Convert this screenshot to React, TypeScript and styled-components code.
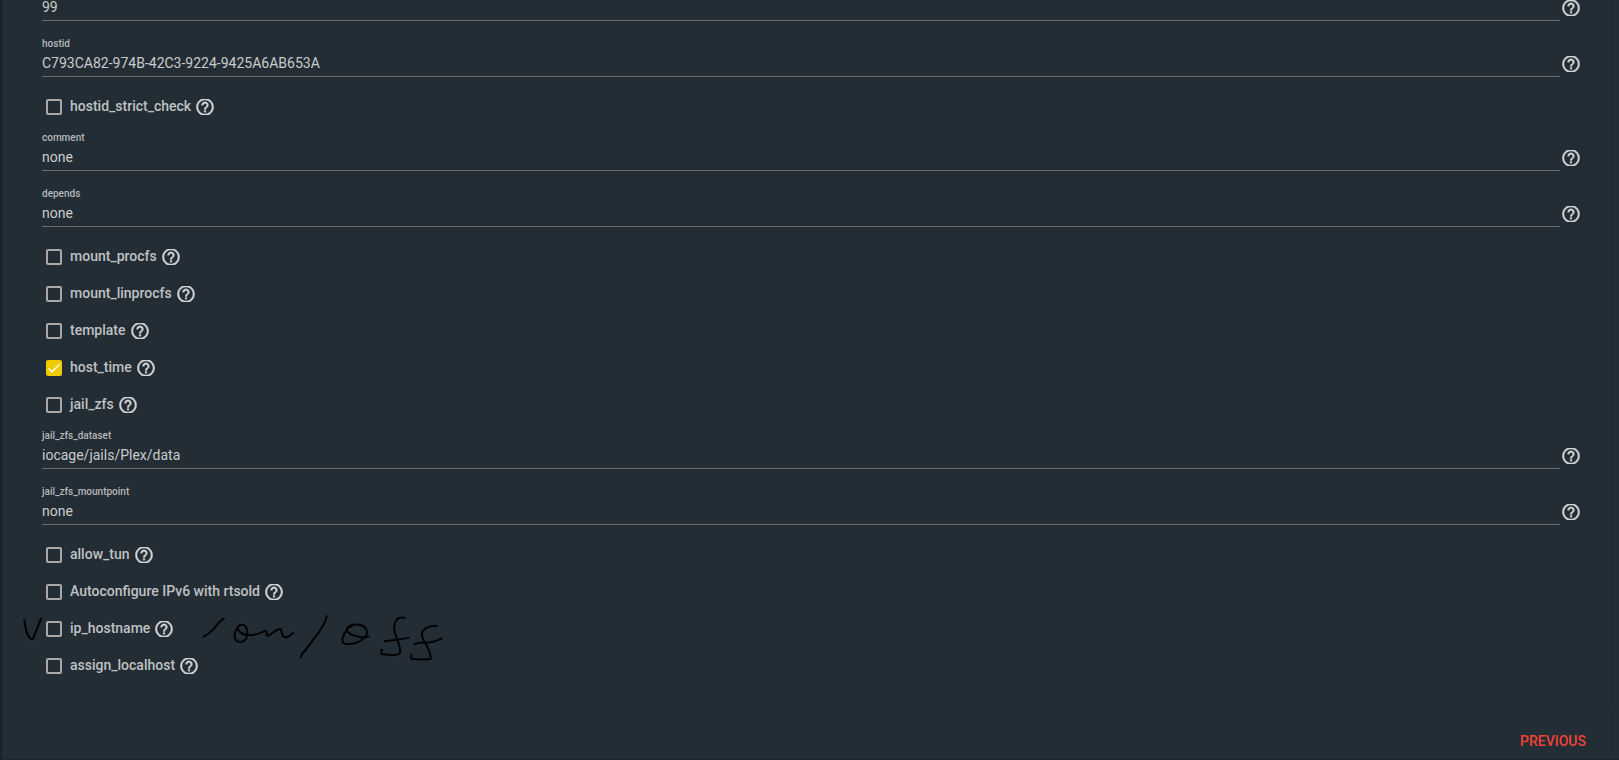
import React, { useId, useState } from "react";
import styled, { createGlobalStyle } from "styled-components";

const GlobalStyle = createGlobalStyle`
  *, *::before, *::after { box-sizing: border-box; }
  body {
    margin: 0;
    background: #232d35;
    color: #cacbcc;
    font-family: Roboto, sans-serif;
    font-size: 14px;
  }
`;

const Page = styled.main`
  min-height: 100vh;
  display: flex;
  padding: 0 7px 0 15px;
  border-left: 2px solid #19212c;
  border-bottom: 1px solid #1c222e;
  overflow: hidden;
`;

const Card = styled.form`
  flex: 1;
  min-width: 0;
  display: flex;
  flex-direction: column;
  border: solid #1f2830;
  border-width: 0 1px;
`;

const Settings = styled.div`
  padding: 0 31px 33px 24px;
`;

const FieldRow = styled.div`
  display: flex;
  align-items: flex-end;
  gap: 2px;
`;

const FieldBody = styled.div`
  flex: 1;
  min-width: 0;
  display: flex;
  flex-direction: column;
  border-bottom: 1px solid #666b70;
`;

const FieldLabel = styled.label`
  padding-top: 16px;
  height: 35px;
  font-size: 10px;
  font-weight: 500;
  line-height: 14px;
  color: #b5b8ba;
`;

const FieldInput = styled.input`
  height: 20px;
  padding: 0 0 6px;
  border: 0;
  outline: 0;
  background: transparent;
  color: inherit;
  font: inherit;
`;

const HelpButton = styled.button`
  display: block;
  padding: 0;
  border: 0;
  background: none;
  color: #d3d4d5;
  cursor: pointer;

  svg { display: block; }
`;

const FieldHelp = styled(HelpButton)`
  margin-bottom: 5px;
`;

const CheckGroup = styled.div`
  display: flex;
  flex-direction: column;
  gap: 21px;
  padding: 22px 0 0 4px;
`;

const CheckRow = styled.div`
  position: relative;
  display: flex;
  align-items: center;
  height: 16px;
`;

const CheckLabel = styled.label`
  display: flex;
  align-items: flex-start;
  gap: 8px;
  height: 16px;
  margin-right: 5px;
  line-height: 14px;
  font-weight: 500;
  color: #bfc1c3;
`;

const Tick = styled.span`
  display: grid;

  > * { grid-area: 1 / 1; }
  svg { pointer-events: none; }
`;

const TickInput = styled.input`
  appearance: none;
  width: 16px;
  height: 16px;
  margin: 0;
  border: 2px solid #aaa9a8;
  border-radius: 2px;

  &:checked {
    border-color: #f0cb00;
    background: #f0cb00;
  }
`;

const Handwriting = styled.svg`
  position: absolute;
  left: -26px;
  top: -11px;
  pointer-events: none;
`;

const Footer = styled.footer`
  flex: 1;
  display: flex;
  justify-content: flex-end;
  align-items: flex-start;
  padding: 23px 25px 0;
  border-top: 1px solid #1f272f;
`;

const TextButton = styled.button`
  padding: 0;
  border: 0;
  background: none;
  color: #f04337;
  font: inherit;
  font-weight: 500;
  line-height: 20px;
  cursor: pointer;
`;

function HelpIcon() {
  return (
    <svg width="18" height="16" viewBox="1.6 2.8 20.8 18.4" fill="currentColor" stroke="currentColor" strokeWidth="0.4" aria-hidden="true">
      <path d="M11 18h2v-2h-2v2zm1-16C6.48 2 2 6.48 2 12s4.48 10 10 10 10-4.48 10-10S17.52 2 12 2zm0 18c-4.41 0-8-3.59-8-8s3.59-8 8-8 8 3.59 8 8-3.59 8-8 8zm0-14c-2.21 0-4 1.79-4 4h2c0-1.1.9-2 2-2s2 .9 2 2c0 2-3 1.75-3 5h2c0-2.25 3-2.5 3-5 0-2.21-1.79-4-4-4z" />
    </svg>
  );
}

function Field({ name, value, hideLabel }: { name: string; value: string; hideLabel?: boolean }) {
  const id = useId();
  const [text, setText] = useState(value);
  return (
    <FieldRow>
      <FieldBody>
        {!hideLabel && <FieldLabel htmlFor={id}>{name}</FieldLabel>}
        <FieldInput
          id={id}
          aria-label={name}
          value={text}
          spellCheck={false}
          onChange={(e) => setText(e.target.value)}
        />
      </FieldBody>
      <FieldHelp type="button" aria-label={`Help: ${name}`}>
        <HelpIcon />
      </FieldHelp>
    </FieldRow>
  );
}

function Check({ name, on, children }: { name: string; on?: boolean; children?: React.ReactNode }) {
  const [checked, setChecked] = useState(!!on);
  return (
    <CheckRow>
      <CheckLabel>
        <Tick>
          <TickInput type="checkbox" checked={checked} onChange={(e) => setChecked(e.target.checked)} />
          {checked && (
            <svg width="16" height="16" viewBox="0 0 24 24" fill="none" stroke="#fff" strokeWidth="2.2" aria-hidden="true">
              <path d="M4.1 12.7 9 17.6 20.3 6.3" />
            </svg>
          )}
        </Tick>
        {name}
      </CheckLabel>
      <HelpButton type="button" aria-label={`Help: ${name}`}>
        <HelpIcon />
      </HelpButton>
      {children}
    </CheckRow>
  );
}

/* Pen strokes over the ip_hostname row, drawn at three units per pixel. */
function PenNote() {
  return (
    <Handwriting width="430" height="60" viewBox="0 0 1290 180" fill="none" stroke="#020304" strokeWidth="6" strokeLinecap="round" strokeLinejoin="round" aria-hidden="true">
      <path d="M13 31C15 45 17 55 19 64Q24 80 34 88H38C43 76 48 64 53 52Q59 38 63 25" />
      <g transform="translate(510 -15)">
        <path d="M41 95Q56 88 70 73L88 51Q95 42 102 41" />
        <path d="M150 60C140 64 133 82 134 97C136 110 151 115 163 107C174 99 175 76 167 65C162 58 150 57 146 63C140 72 147 82 159 87C176 94 201 89 222 79Q232 73 230 91Q236 94 243 87Q262 72 270 72C279 73 270 94 285 97Q294 98 310 83" />
        <path d="M410 34C407 54 397 67 384 85L350 130Q334 148 332 158Q334 143 349 137" />
        <path d="M484 66C489 61 481 61 475 69Q462 82 457 104C456 116 467 118 481 117C502 115 520 105 529 91C536 77 525 62 508 59C489 56 470 64 470 74C471 85 493 93 510 96Q524 99 536 95" />
        <path d="M645 38C631 36 622 37 617 49C609 66 612 77 620 99C626 115 633 132 630 144C623 153 603 151 574 147Q572 140 576 134M584 109Q602 106 618 104Q640 103 656 98" />
        <path d="M740 62C722 62 710 65 700 76C690 88 699 103 710 122Q722 142 722 162Q695 165 664 161V149M674 117Q690 111 710 113Q732 112 755 100" />
      </g>
    </Handwriting>
  );
}

export default function App() {
  return (
    <>
      <GlobalStyle />
      <Page>
        <Card onSubmit={(e) => e.preventDefault()}>
          <Settings>
            <Field name="priority" value="99" hideLabel />
            <Field name="hostid" value="C793CA82-974B-42C3-9224-9425A6AB653A" />
            <CheckGroup>
              <Check name="hostid_strict_check" />
            </CheckGroup>
            <Field name="comment" value="none" />
            <Field name="depends" value="none" />
            <CheckGroup>
              <Check name="mount_procfs" />
              <Check name="mount_linprocfs" />
              <Check name="template" />
              <Check name="host_time" on />
              <Check name="jail_zfs" />
            </CheckGroup>
            <Field name="jail_zfs_dataset" value="iocage/jails/Plex/data" />
            <Field name="jail_zfs_mountpoint" value="none" />
            <CheckGroup>
              <Check name="allow_tun" />
              <Check name="Autoconfigure IPv6 with rtsold" />
              <Check name="ip_hostname">
                <PenNote />
              </Check>
              <Check name="assign_localhost" />
            </CheckGroup>
          </Settings>
          <Footer>
            <TextButton type="button">PREVIOUS</TextButton>
          </Footer>
        </Card>
      </Page>
    </>
  );
}
